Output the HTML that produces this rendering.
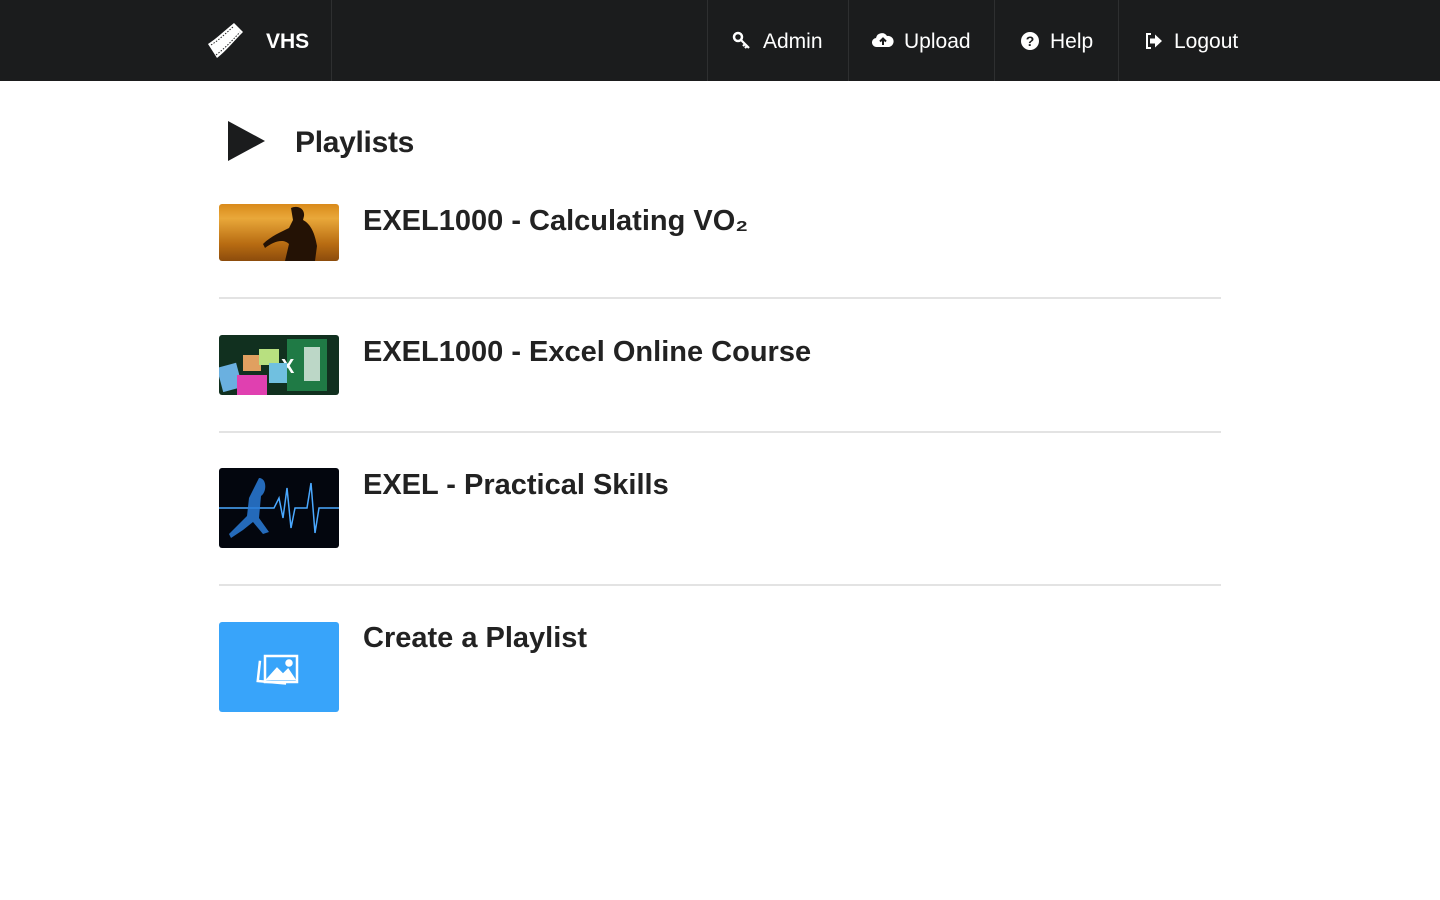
<!DOCTYPE html>
<html><head><style>
*{margin:0;padding:0;box-sizing:border-box}
body{width:1440px;height:900px;background:#fff;font-family:"Liberation Sans",sans-serif;color:#222;position:relative;overflow:hidden}
.nav{position:absolute;left:0;top:0;width:1440px;height:81px;background:#1b1c1d}
.nav .sep{position:absolute;top:0;width:1px;height:81px;background:#2e2f30}
.nav .t{position:absolute;top:30px;color:#fff;font-size:21px}
.thumb{position:absolute;left:219px;width:120px;border-radius:3px;overflow:hidden}
h2{position:absolute;left:363px;font-size:29px;font-weight:bold;letter-spacing:0px;color:#222}
.hr{position:absolute;left:219px;width:1002px;height:2px;background:#e3e3e3}
</style></head><body>
<div class="nav">
<svg style="position:absolute;left:205px;top:20px" width="40" height="42" viewBox="0 0 40 42"><path d="M3 24 C12 18,18 12,29 3 L38 12 C28 22,22 30,12 38 Z" fill="#fff"/><path d="M6 25 C14 20,20 14,29 6 M11 35 C20 28,26 22,35 12" stroke="#222" stroke-width="1" stroke-dasharray="1.5 1.5" fill="none"/></svg>
<div class="t" style="left:266px;font-weight:bold;font-size:21px">VHS</div>
<div class="sep" style="left:331px"></div>
<div class="sep" style="left:707px"></div>
<div class="sep" style="left:848px"></div>
<div class="sep" style="left:994px"></div>
<div class="sep" style="left:1118px"></div>
<svg style="position:absolute;left:732px;top:31px" width="20" height="20" viewBox="0 0 20 20"><circle cx="6" cy="6" r="4" stroke="#fff" stroke-width="2.5" fill="none"/><path d="M9 9 L17 17 M13 13 L11 15 M15 15 L13 17" stroke="#fff" stroke-width="2.2"/></svg>
<div class="t" style="left:763px">Admin</div>
<svg style="position:absolute;left:872px;top:31px" width="22" height="18" viewBox="0 0 22 18"><path d="M5 16 A4.5 4.5 0 0 1 4 7 A6 6 0 0 1 15 5 A5.5 5.5 0 0 1 17 16 Z" fill="#fff"/><path d="M11 14 V8 M8 10.5 L11 7.5 L14 10.5" stroke="#1b1c1d" stroke-width="2" fill="none"/></svg>
<div class="t" style="left:904px">Upload</div>
<svg style="position:absolute;left:1020px;top:31px" width="20" height="20" viewBox="0 0 20 20"><circle cx="10" cy="10" r="9" fill="#fff"/><text x="10" y="15" text-anchor="middle" font-size="14" font-weight="bold" fill="#1b1c1d" font-family="Liberation Sans">?</text></svg>
<div class="t" style="left:1050px">Help</div>
<svg style="position:absolute;left:1144px;top:31px" width="20" height="20" viewBox="0 0 20 20"><path d="M7 3 H3 V17 H7" stroke="#fff" stroke-width="2" fill="none"/><path d="M6 7.5 H11 V3.5 L18 10 L11 16.5 V12.5 H6 Z" fill="#fff"/></svg>
<div class="t" style="left:1174px">Logout</div>
</div>

<svg style="position:absolute;left:227px;top:121px" width="38" height="40"><path d="M1 0 L38 20 L1 40 Z" fill="#1b1c1d"/></svg>
<div style="position:absolute;left:295px;top:126px;font-size:30px;font-weight:bold;letter-spacing:-0.3px">Playlists</div>

<div class="thumb" style="top:204px;height:57px;background:linear-gradient(180deg,#d98a1a 0%,#e9a83a 25%,#b86c12 70%,#8c4c0c 100%)"><svg width="120" height="57"><path d="M72 4 C78 1,86 4,85 12 L84 16 C92 20,96 30,98 42 L96 57 L66 57 L70 40 C64 34,54 38,46 44 L44 40 C52 32,62 28,70 24 L74 16 Z" fill="#241205"/></svg></div>
<h2 style="top:205px">EXEL1000 - Calculating VO₂</h2>
<div class="hr" style="top:297px"></div>

<div class="thumb" style="top:335px;height:60px;background:#11301f"><svg width="120" height="60"><rect x="68" y="4" width="40" height="52" fill="#1f7a45"/><text x="62" y="38" fill="#fff" font-size="20" font-weight="bold" font-family="Liberation Sans">X</text><rect x="85" y="12" width="16" height="34" fill="#fff" opacity=".7"/><rect x="0" y="30" width="20" height="25" fill="#6ab0e0" transform="rotate(-15 10 40)"/><rect x="18" y="40" width="30" height="22" fill="#e040b0"/><rect x="24" y="20" width="18" height="16" fill="#e0a060"/><rect x="40" y="14" width="20" height="16" fill="#b8e080"/><rect x="50" y="28" width="18" height="20" fill="#70c0e0"/></svg></div>
<h2 style="top:336px">EXEL1000 - Excel Online Course</h2>
<div class="hr" style="top:431px"></div>

<div class="thumb" style="top:468px;height:80px;background:#03060e"><svg width="120" height="80"><path d="M0 40 H55 L60 30 L64 50 L68 20 L72 60 L76 40 H88 L92 15 L96 65 L100 40 H120" stroke="#4aa8ff" stroke-width="1.5" fill="none"/><path d="M40 10 C48 10,48 24,42 28 L40 50 L50 64 L44 66 L34 54 L24 62 L12 70 L10 66 L28 48 L30 30 Z" fill="#2a7cd8" opacity=".85"/></svg></div>
<h2 style="top:469px">EXEL - Practical Skills</h2>
<div class="hr" style="top:584px"></div>

<div class="thumb" style="top:622px;height:90px;background:#38a4fa"><svg width="120" height="90"><g stroke="#fff" stroke-width="2.5" fill="none"><path d="M42 38 L38 58 L66 63" transform="rotate(-5 50 50)"/><rect x="46" y="34" width="32" height="26"/><path d="M49 57 L58 47 L64 53 L69 48 L75 57 Z" fill="#fff"/><circle cx="70" cy="41" r="2.5" fill="#fff"/></g></svg></div>
<h2 style="top:622px">Create a Playlist</h2>
</body></html>
